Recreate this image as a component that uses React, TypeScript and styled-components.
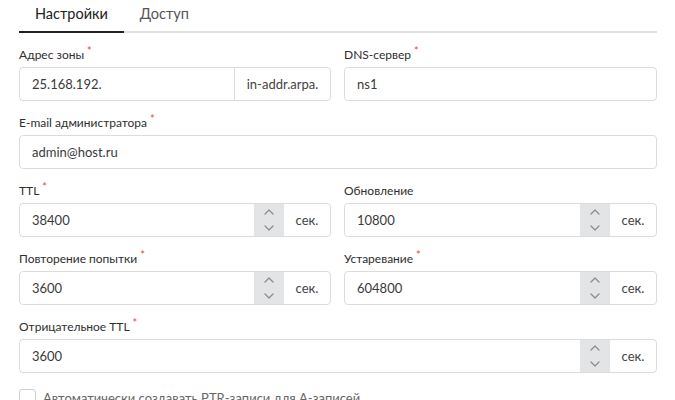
import React from "react";
import styled, { createGlobalStyle } from "styled-components";

const Global = createGlobalStyle`
  html, body { margin: 0; padding: 0; background: #fff; }
  body { font-family: Lato, "Noto Sans", sans-serif; color: #333; }
  * { box-sizing: border-box; }
`;

const Page = styled.div`
  padding: 0 18px 0 19px;
  width: 675px;
  height: 400px;
  overflow: hidden;
`;

const TabBar = styled.div`
  display: flex;
  height: 33px;
  border-bottom: 2px solid #e0e0e0;
`;

const Tab = styled.div<{ $active?: boolean }>`
  padding: 4px 16px 0;
  font-size: 14.5px;
  line-height: 20px;
  color: ${(p) => (p.$active ? "#222" : "#555")};
  border-bottom: 2px solid ${(p) => (p.$active ? "#222" : "transparent")};
  margin-bottom: -2px;
`;

const Form = styled.div`
  display: grid;
  grid-template-columns: 312px 1fr;
  column-gap: 13px;
  row-gap: 14px;
  padding-top: 14px;
`;

const Field = styled.div<{ $full?: boolean }>`
  display: flex;
  flex-direction: column;
  grid-column: ${(p) => (p.$full ? "1 / -1" : "auto")};
`;

const Label = styled.div`
  font-size: 12px;
  line-height: 16px;
  height: 16px;
  margin-bottom: 4px;
  color: #2e2e2e;
`;

const Req = styled.span`
  position: relative;
  top: -4px;
  line-height: 0;
  color: #e5484d;
  font-size: 11px;
  margin-left: 3px;
`;

const Box = styled.div`
  display: flex;
  height: 34px;
  border: 1px solid #dcdcdc;
  border-radius: 4px;
  overflow: hidden;
  background: #fff;
`;

const Value = styled.div`
  flex: 1;
  padding: 0 12px;
  font-size: 13px;
  line-height: 32px;
  color: #3a3a3a;
`;

const Addon = styled.div<{ $w: number; $divider?: boolean }>`
  width: ${(p) => p.$w}px;
  display: flex;
  align-items: center;
  justify-content: center;
  font-size: 13px;
  color: #444;
  border-left: ${(p) => (p.$divider ? "1px solid #dcdcdc" : "none")};
`;

const Stepper = styled.div`
  width: 30px;
  background: #e3e4e6;
  display: flex;
  flex-direction: column;
`;

const StepBtn = styled.div`
  flex: 1;
  display: flex;
  align-items: center;
  justify-content: center;
  color: #8a8a8a;
`;

const CheckRow = styled.div`
  display: flex;
  align-items: flex-start;
  gap: 7px;
  margin-top: 16px;
`;

const Check = styled.div`
  width: 17px;
  height: 17px;
  flex: none;
  border: 1px solid #d0d0d0;
  border-radius: 3px;
  background: #fff;
`;

const CheckText = styled.span`
  font-size: 13px;
  line-height: 16px;
  padding-top: 1px;
  color: #666;
`;

const Chevron = ({ up }: { up?: boolean }) => (
  <svg width="10" height="6" viewBox="0 0 10 6" fill="none">
    <path
      d={up ? "M1 5L5 1L9 5" : "M1 1L5 5L9 1"}
      stroke="currentColor"
      strokeWidth="1.2"
      strokeLinecap="round"
      strokeLinejoin="round"
    />
  </svg>
);

const NumberInput = ({ value }: { value: string }) => (
  <Box>
    <Value>{value}</Value>
    <Stepper>
      <StepBtn>
        <Chevron up />
      </StepBtn>
      <StepBtn>
        <Chevron />
      </StepBtn>
    </Stepper>
    <Addon $w={46}>сек.</Addon>
  </Box>
);

export default function App() {
  return (
    <Page>
      <Global />
      <TabBar>
        <Tab $active>Настройки</Tab>
        <Tab>Доступ</Tab>
      </TabBar>
      <Form>
        <Field>
          <Label>
            Адрес зоны<Req>*</Req>
          </Label>
          <Box>
            <Value>25.168.192.</Value>
            <Addon $w={96} $divider>
              in-addr.arpa.
            </Addon>
          </Box>
        </Field>
        <Field>
          <Label>
            DNS-сервер<Req>*</Req>
          </Label>
          <Box>
            <Value>ns1</Value>
          </Box>
        </Field>
        <Field $full>
          <Label>
            E-mail администратора<Req>*</Req>
          </Label>
          <Box>
            <Value>admin@host.ru</Value>
          </Box>
        </Field>
        <Field>
          <Label>
            TTL<Req>*</Req>
          </Label>
          <NumberInput value="38400" />
        </Field>
        <Field>
          <Label>Обновление</Label>
          <NumberInput value="10800" />
        </Field>
        <Field>
          <Label>
            Повторение попытки<Req>*</Req>
          </Label>
          <NumberInput value="3600" />
        </Field>
        <Field>
          <Label>
            Устаревание<Req>*</Req>
          </Label>
          <NumberInput value="604800" />
        </Field>
        <Field $full>
          <Label>
            Отрицательное TTL<Req>*</Req>
          </Label>
          <NumberInput value="3600" />
        </Field>
      </Form>
      <CheckRow>
        <Check />
        <CheckText>Автоматически создавать PTR-записи для A-записей</CheckText>
      </CheckRow>
    </Page>
  );
}
